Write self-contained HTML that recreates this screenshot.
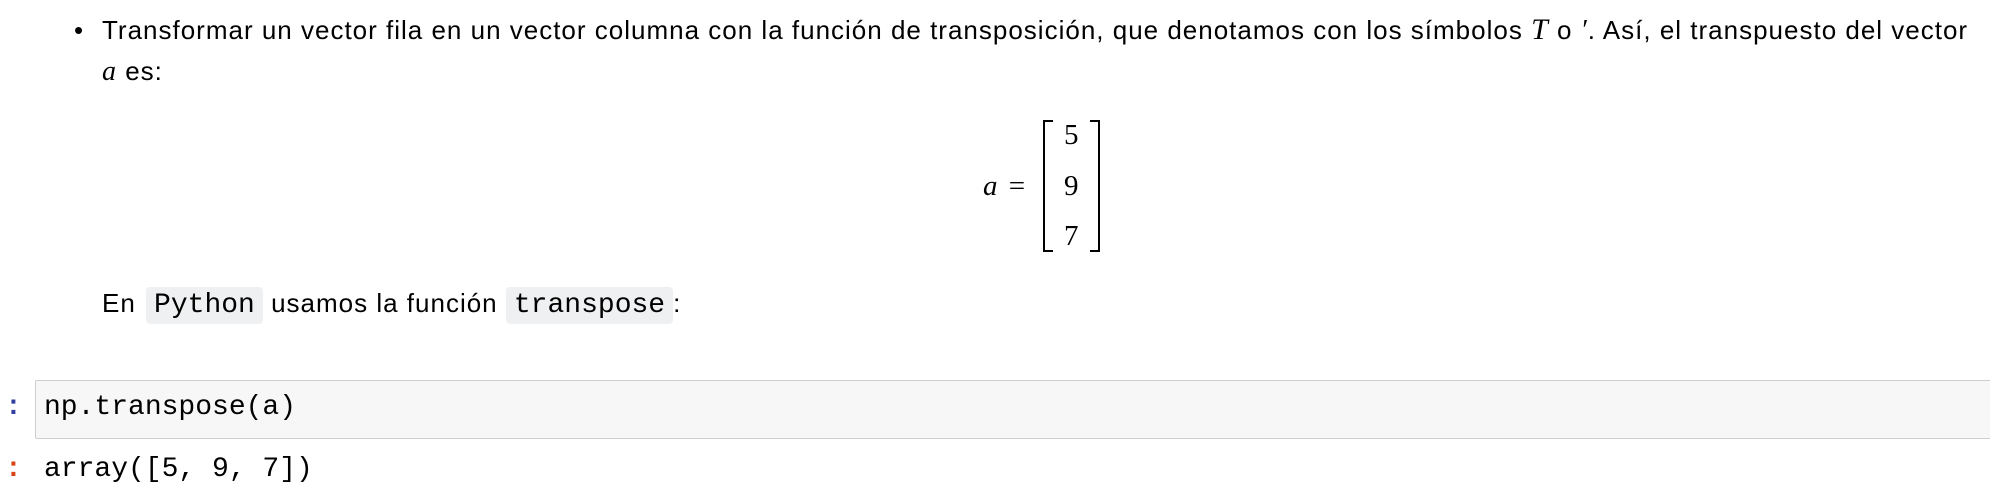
<!DOCTYPE html>
<html><head><meta charset="utf-8"><style>
html,body{margin:0;padding:0;background:#fff;width:1990px;height:496px;overflow:hidden}
body{position:relative;font-family:"Liberation Sans",Arial,sans-serif;color:#000}
.t{position:absolute;white-space:nowrap;font-size:26px;line-height:30px;letter-spacing:1px}
.m{font-family:"Liberation Mono",monospace;font-size:28px;letter-spacing:0}
.s{font-family:"Liberation Serif",serif;font-style:italic}
.c{background:#eff0f1;border-radius:4px;padding:0 8px}
.box{position:absolute;left:35px;top:380px;width:1960px;height:57px;background:#f7f7f7;border:1px solid #cfcfcf;border-radius:2px}
.br{position:absolute;border:2px solid #000;width:8px}
</style></head><body>
<div class="t" style="left:74px;top:15px">•</div>
<div class="t" style="left:102px;top:15px">Transformar un vector fila en un vector columna con la función de transposición, que denotamos con los símbolos <span class="s" style="font-size:30px">T</span> o <span class="s" style="font-size:28px">′</span>. Así, el transpuesto del vector</div>
<div class="t" style="left:102px;top:56px"><span class="s" style="font-size:28px">a</span> es:</div>
<div class="t" style="left:983px;top:171px;font-family:'Liberation Serif',serif;font-size:29px;letter-spacing:0"><i>a</i> <span style="margin-left:4px">=</span></div>
<div class="br" style="left:1043px;top:120px;height:128px;border-right:none"></div>
<div class="br" style="left:1090px;top:120px;height:128px;border-left:none"></div>
<div class="t" style="left:1064px;top:120px;font-family:'Liberation Serif',serif;font-size:29px;letter-spacing:0">5</div>
<div class="t" style="left:1064px;top:171px;font-family:'Liberation Serif',serif;font-size:29px;letter-spacing:0">9</div>
<div class="t" style="left:1064px;top:221px;font-family:'Liberation Serif',serif;font-size:29px;letter-spacing:0">7</div>
<div class="t" style="left:102px;top:285px;line-height:37px">En <span class="c m" style="display:inline-block;line-height:37px;margin-left:2px">Python</span> usamos la función <span class="c m" style="display:inline-block;line-height:37px">transpose</span>:</div>
<div class="box"></div>
<div class="t m" style="left:5px;top:393px;color:#303f9f;font-weight:bold">:</div>
<div class="t m" style="left:44px;top:393px">np.transpose(a)</div>
<div class="t m" style="left:5px;top:455px;color:#d84315;font-weight:bold">:</div>
<div class="t m" style="left:44px;top:455px">array([5, 9, 7])</div>
</body></html>
